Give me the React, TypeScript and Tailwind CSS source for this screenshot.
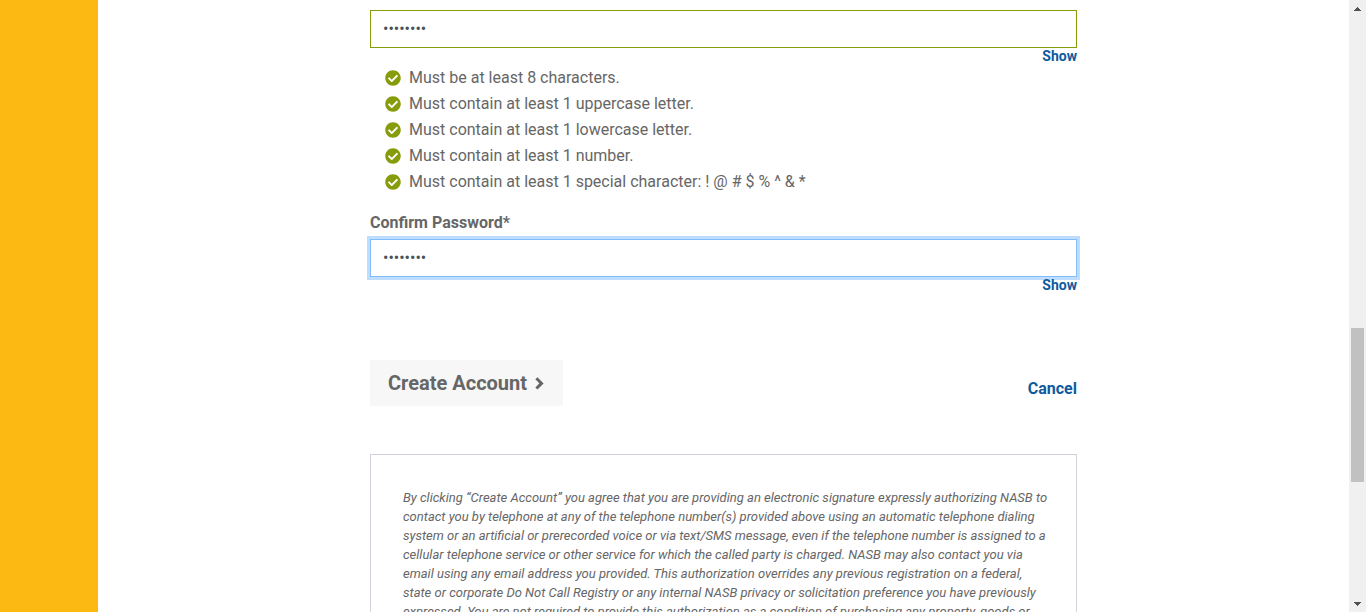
import { useState } from 'react';
import { FaCheckCircle } from 'react-icons/fa';

const rules = [
  'Must be at least 8 characters.',
  'Must contain at least 1 uppercase letter.',
  'Must contain at least 1 lowercase letter.',
  'Must contain at least 1 number.',
  'Must contain at least 1 special character: ! @ # $ % ^ & *',
];

type PasswordFieldProps = {
  id: string;
  inputClass: string;
  label?: string;
};

function PasswordField({ id, inputClass, label }: PasswordFieldProps) {
  const [visible, setVisible] = useState(false);
  return (
    <div className="flex flex-col">
      {label && (
        <label htmlFor={id} className="mb-1 font-bold leading-6">
          {label}
        </label>
      )}
      <input
        id={id}
        type={visible ? 'text' : 'password'}
        aria-label={label ? undefined : 'Password'}
        defaultValue="Abcdef1!"
        className={`h-[38px] w-full border bg-white px-3 pb-0.5 text-base text-[#495057] outline-none ${inputClass}`}
      />
      <button
        type="button"
        onClick={() => setVisible(!visible)}
        className="self-end text-sm font-bold leading-4 text-[#0e5a9e]"
      >
        {visible ? 'Hide' : 'Show'}
      </button>
    </div>
  );
}

function ScrollBar() {
  return (
    <div aria-hidden="true" className="flex w-[17px] shrink-0 flex-col items-center bg-[#f0f0f0]">
      <div className="flex h-[17px] items-center">
        <svg width="7" height="4" viewBox="0 0 7 4" fill="#505050" shapeRendering="crispEdges">
          <path d="M3 0h1v1h1v1h1v1h1v1H0V3h1V2h1V1h1z" />
        </svg>
      </div>
      <div className="flex w-full flex-1 flex-col items-center">
        <div className="grow-[311]" />
        <div className="w-[13px] grow-[154] bg-[#c1c1c1]" />
        <div className="grow-[113]" />
      </div>
      <div className="flex h-[17px] items-center">
        <svg width="7" height="4" viewBox="0 0 7 4" fill="#505050" shapeRendering="crispEdges">
          <path d="M0 0h7v1H6v1H5v1H4v1H3V3H2V2H1V1H0z" />
        </svg>
      </div>
    </div>
  );
}

export default function App() {
  return (
    <div className="flex h-screen overflow-hidden bg-white font-['Roboto',sans-serif] text-base text-[#666666]">
      <div className="w-[98px] shrink-0 bg-[#fdb913]" />
      <main className="min-w-0 flex-1 pl-[272px] pr-[272px] pt-[10px]">
        <form onSubmit={(event) => event.preventDefault()}>
          <PasswordField id="password" inputClass="border-[#869c0a]" />
          <ul className="pl-[15px] pt-px">
            {rules.map((rule) => (
              <li key={rule} className="flex items-center gap-2 leading-[26px]">
                <FaCheckCircle size={16} color="#869c0a" className="shrink-0" />
                {rule}
              </li>
            ))}
          </ul>
          <div className="mt-4">
            <PasswordField
              id="confirm-password"
              label="Confirm Password*"
              inputClass="border-[#80bdff] ring-3 ring-[#bfdeff]"
            />
          </div>
          <div className="mt-[67px] flex items-center justify-between">
            <button
              type="submit"
              className="flex h-[46px] items-center gap-2 bg-[#f7f7f7] px-[18px] text-xl font-bold"
            >
              Create Account
              <svg width="10" height="13" viewBox="0 0 10 13" fill="none" stroke="currentColor" strokeWidth="3">
                <path d="M1.4 1.3l5.1 5.1-5.1 5.1" />
              </svg>
            </button>
            <a href="#cancel" className="mt-3 font-bold text-[#0e5a9e]">
              Cancel
            </a>
          </div>
        </form>
        <section className="mt-12 border border-[#ced4da] pb-8 pl-8 pr-6 pt-[33px]">
          <p className="text-[13px] italic leading-[19px]">
            By clicking “Create Account” you agree that you are providing an electronic signature expressly
            authorizing NASB to contact you by telephone at any of the telephone number(s) provided above using
            an automatic telephone dialing system or an artificial or prerecorded voice or via text/SMS message,
            even if the telephone number is assigned to a cellular telephone service or other service for which
            the called party is charged. NASB may also contact you via email using any email address you
            provided. This authorization overrides any previous registration on a federal, state or corporate Do
            Not Call Registry or any internal NASB privacy or solicitation preference you have previously
            expressed. You are not required to provide this authorization as a condition of purchasing any
            property, goods or services.
          </p>
        </section>
      </main>
      <ScrollBar />
    </div>
  );
}
